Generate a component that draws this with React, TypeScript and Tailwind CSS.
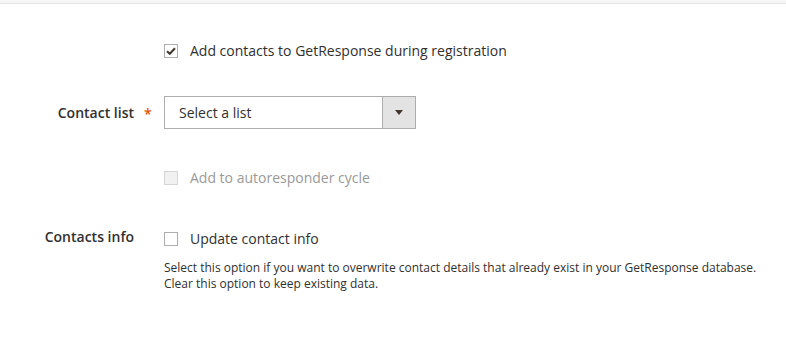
import React from "react";

function Check({ checked, disabled }: { checked?: boolean; disabled?: boolean }) {
  return (
    <span
      className={`inline-flex items-center justify-center w-[14px] h-[14px] border shrink-0 ${
        disabled ? "border-[#d6d6d6] bg-[#f1f1f1]" : "border-[#adadad] bg-white"
      }`}
    >
      {checked && (
        <svg width="10" height="8" viewBox="0 0 10 8">
          <path d="M1 4.2 L3.8 6.8 L9 1.2" fill="none" stroke="#41362f" strokeWidth="2" />
        </svg>
      )}
    </span>
  );
}

export default function App() {
  return (
    <div className="w-[786px] h-[338px] bg-white text-[#303030] overflow-hidden" style={{ fontFamily: '"Open Sans", sans-serif' }}>
      <div className="h-[4px] bg-[#f5f5f5] border-b border-[#e3e3e3]" />

      <div className="mt-[37px] flex items-center h-[20px] pl-[164px]">
        <Check checked />
        <span className="ml-[12px] text-[14px] leading-[20px]">Add contacts to GetResponse during registration</span>
      </div>

      <div className="mt-[35px] flex items-center">
        <div className="w-[164px] pr-[30px] flex justify-end">
          <span className="relative text-[14px] font-semibold">
            Contact list
            <span className="absolute left-[calc(100%+10px)] top-[1px] text-[#eb5202] text-[14px]">*</span>
          </span>
        </div>
        <div className="flex w-[252px] h-[33px] border border-[#adadad]">
          <div className="flex-1 flex items-center pl-[14px] text-[14px]">Select a list</div>
          <div className="w-[33px] bg-[#e3e3e3] border-l border-[#adadad] flex items-center justify-center">
            <svg width="8" height="5" viewBox="0 0 8 5">
              <path d="M0 0 H8 L4 5 Z" fill="#41362f" />
            </svg>
          </div>
        </div>
      </div>

      <div className="mt-[39px] flex items-center h-[20px] pl-[164px]">
        <Check disabled />
        <span className="ml-[12px] text-[14px] leading-[20px] text-[#999999]">Add to autoresponder cycle</span>
      </div>

      <div className="mt-[41px] flex items-start">
        <div className="w-[164px] pr-[30px] text-right text-[14px] font-semibold leading-[20px] -mt-[2px]">Contacts info</div>
        <div>
          <div className="flex items-center h-[20px]">
            <Check />
            <span className="ml-[12px] text-[14px] leading-[20px]">Update contact info</span>
          </div>
          <div className="mt-[11px] text-[12px] leading-[16px]">
            Select this option if you want to overwrite contact details that already exist in your GetResponse database.
            <br />
            Clear this option to keep existing data.
          </div>
        </div>
      </div>
    </div>
  );
}
